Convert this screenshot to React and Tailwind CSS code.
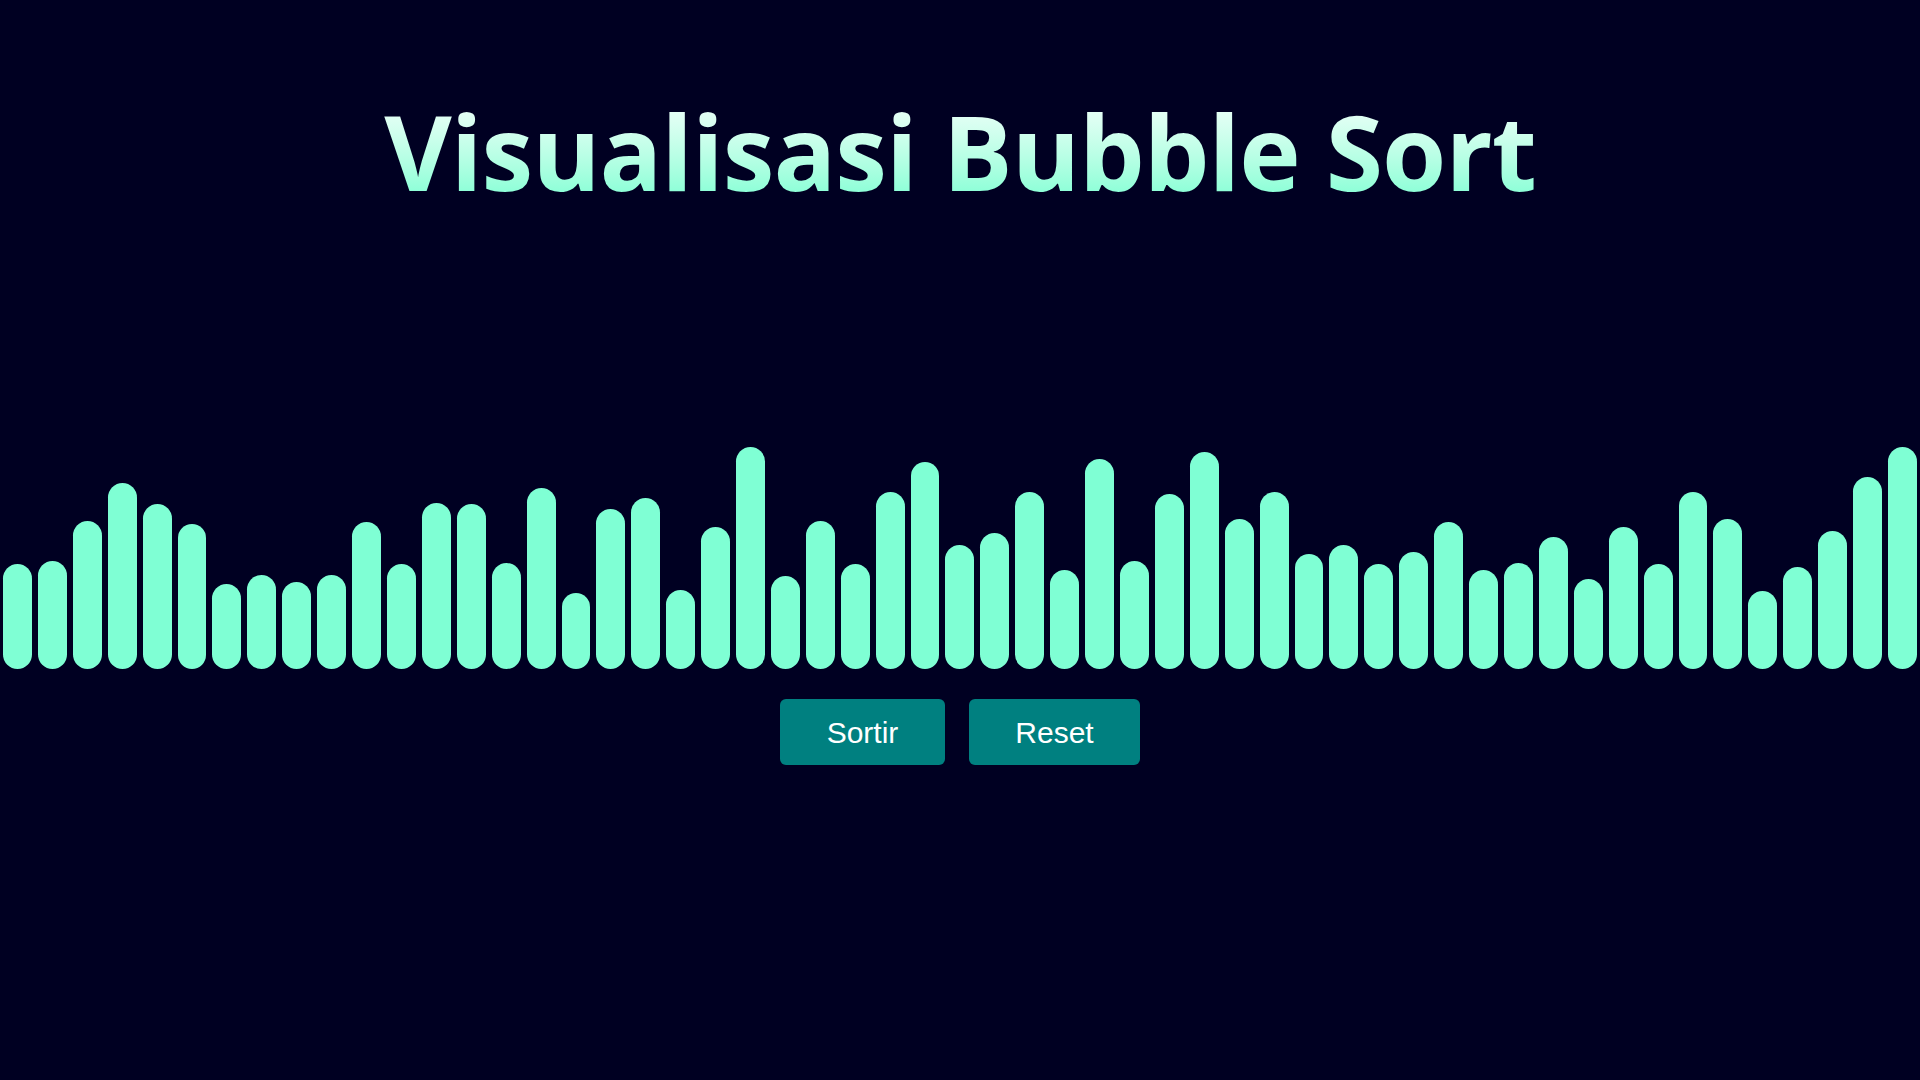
import { useState } from "react";

const initial = [
  105, 108, 148, 186, 165, 145, 85, 94, 87, 94, 147, 105, 166, 165, 106, 181, 76, 160, 171, 79,
  142, 222, 93, 148, 105, 177, 207, 124, 136, 177, 99, 210, 108, 175, 217, 150, 177, 115, 124, 105,
  117, 147, 99, 106, 132, 90, 142, 105, 177, 150, 78, 102, 138, 192, 222,
];

const App = () => {
  const [bars, setBars] = useState(initial);

  const handleSort = () => {
    setBars([...bars].sort((a, b) => a - b));
  };

  const handleReset = () => {
    setBars(initial);
  };

  return (
    <div className="min-h-screen bg-[#000022] flex flex-col items-center">
      <h1
        className="mt-[99px] text-[104px] font-bold leading-none tracking-[-1px] bg-gradient-to-b from-[#f0fffa] to-[#7fffd4] bg-clip-text text-transparent"
        style={{ fontFamily: '"Open Sans", "Noto Sans", sans-serif' }}
      >
        Visualisasi Bubble Sort
      </h1>
      <div className="mt-[226px] flex items-end w-full h-[240px]">
        {bars.map((h, i) => (
          <div key={i} className="flex-1 mx-[3px] rounded-full bg-[#7fffd4]" style={{ height: h }} />
        ))}
      </div>
      <div className="mt-[30px] flex gap-6" style={{ fontFamily: '"Liberation Sans", Arial, sans-serif' }}>
        <button onClick={handleSort} className="w-[165px] h-[66px] bg-[#008080] text-white text-[30px] rounded-md">
          Sortir
        </button>
        <button onClick={handleReset} className="w-[171px] h-[66px] bg-[#008080] text-white text-[30px] rounded-md">
          Reset
        </button>
      </div>
    </div>
  );
};

export default App;
